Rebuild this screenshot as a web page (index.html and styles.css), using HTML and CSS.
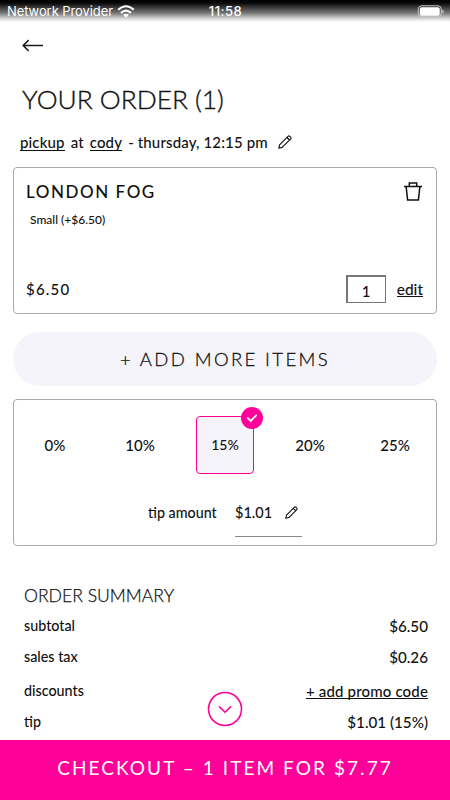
FILE: index.html
```html
<!DOCTYPE html>
<html lang="en">
<head>
<meta charset="utf-8">
<title>Your order</title>
<link rel="stylesheet" href="styles.css">
</head>
<body>
<svg width="0" height="0" class="defs">
  <symbol id="pencil" viewBox="0 0 14 14"><path d="M.8 13.2 1.6 9.9 10.2 1.2Q10.9.6 11.6 1.2L12.8 2.4Q13.4 3.1 12.8 3.8L4.1 12.4ZM9 2.5 11.5 5" fill="none" stroke="#111" stroke-width="1.15" stroke-linejoin="round"/></symbol>
</svg>
<div class="app">
  <header class="status">
    <div class="carrier"><span class="network">Network Provider</span>
      <svg class="wifi" width="18" height="13" viewBox="0 0 18 13"><g fill="none" stroke="#fff" stroke-width="2.1"><path d="M1.2 4.8Q9-2.3 16.8 4.8"/><path d="M4 7.9Q9 3.4 14 7.9"/></g><path d="M6.2 9.8Q9 7.6 11.8 9.8L9 12.7Z" fill="#fff"/></svg>
    </div>
    <span class="clock">11:58</span>
    <svg class="battery" width="28" height="13" viewBox="0 0 28 13"><rect x="2.3" y=".8" width="23" height="11.2" rx="3.3" fill="none" stroke="#c8c8c8" stroke-width="1"/><rect x="3.9" y="2.2" width="19.8" height="8.5" rx="1.7" fill="#fff"/><path d="M26.4 4.4Q27.8 5 27.8 6.4T26.4 8.4Z" fill="#c8c8c8"/></svg>
  </header>
  <svg class="back" width="22" height="14" viewBox="0 0 22 14"><path d="M21 7.5H1.2M6.6 2.1 1.2 7.5 6.6 12.9" fill="none" stroke="#1b1b1b" stroke-width="1.5"/></svg>
  <h1 class="title">YOUR ORDER (1)</h1>
  <div class="pickup"><span class="link">pickup</span><span class="at">at</span><span class="link">cody</span><span class="when">- thursday, 12:15 pm</span><svg class="pencil" width="14" height="14"><use href="#pencil"/></svg></div>
  <section class="item card">
    <div class="item-row">
      <h2 class="item-name">LONDON FOG</h2>
      <svg class="trash" width="18" height="19" viewBox="0 0 18 19"><path d="M0 4.4H18M5.3 4.4V1H12.7V4.4M2.1 4.4 3.6 17.9H14.4L15.9 4.4" fill="none" stroke="#111" stroke-width="1.5"/></svg>
    </div>
    <p class="option">Small (+$6.50)</p>
    <div class="item-foot"><span class="price">$6.50</span><span class="qty">1</span><span class="link edit">edit</span></div>
  </section>
  <button class="add">+ ADD MORE ITEMS</button>
  <section class="tips card">
    <div class="tip-options">
      <span class="tip">0%</span><span class="tip">10%</span>
      <span class="tip selected">15%<svg class="check" width="22" height="22" viewBox="0 0 22 22"><circle cx="11" cy="11" r="11" fill="#ff0099"/><path d="M6.8 11.2 9.7 13.9 15.2 8.4" fill="none" stroke="#fff" stroke-width="1.8" stroke-linecap="round"/></svg></span>
      <span class="tip">20%</span><span class="tip">25%</span>
    </div>
    <div class="tip-amount"><span class="tip-label">tip amount</span><div class="tip-field"><span class="tip-value">$1.01</span><svg width="13" height="13"><use href="#pencil"/></svg></div></div>
  </section>
  <section class="summary">
    <h3 class="summary-title">ORDER SUMMARY</h3>
    <div class="line subtotal"><span class="label">subtotal</span><span class="value">$6.50</span></div>
    <div class="line tax"><span class="label">sales tax</span><span class="value">$0.26</span></div>
    <div class="line discounts"><span class="label">discounts</span><span class="link promo">+ add promo code</span></div>
    <div class="line"><span class="label">tip</span><span class="value total-tip">$1.01 (15%)</span></div>
  </section>
  <svg class="scroll" width="36" height="36" viewBox="0 0 36 36"><circle cx="18" cy="18" r="16.5" fill="#fff" stroke="#ff0099" stroke-width="1.6"/><path d="M12 15.4 18 21.2 24 15.4" fill="none" stroke="#ff0099" stroke-width="1.5"/></svg>
  <footer class="checkout">CHECKOUT – 1 ITEM FOR $7.77</footer>
</div>
</body>
</html>
```
FILE: styles.css
```css
* { box-sizing: border-box; }
body { margin: 0; background: #fff; color: #111; font: 500 15px/20px Lato, "Liberation Sans", sans-serif; }
h1, h2, h3, p { margin: 0; }
.defs { position: absolute; }
.app { position: relative; width: 450px; height: 800px; display: flex; flex-direction: column; overflow: hidden; white-space: nowrap; }
.status { height: 22px; flex: none; display: grid; grid-template-columns: 1fr auto 1fr; align-items: center; padding: 0 6px 0 7px; background: linear-gradient(#000 0, #080808 3px, #777 13px, #ddd 19px, #fff 22px); color: #fff; font: 400 13px/20px Inter, sans-serif; }
.carrier { display: flex; align-items: center; gap: 4px; }
.network { letter-spacing: -.08px; }
.clock { font-weight: 500; letter-spacing: .5px; }
.battery { justify-self: end; }
.back { margin: 16px 0 0 22px; flex: none; height: 14px; }
.title { margin: 31px 0 0 22px; height: 32px; font-size: 26.4px; line-height: 32px; font-weight: 300; letter-spacing: -.05px; -webkit-text-stroke: .35px #111; }
.pickup { display: flex; align-items: center; height: 20px; margin: 17px 0 0 20px; letter-spacing: .14px; }
.at { margin: 0 6px; }
.when { margin-left: 6px; }
.pencil { margin-left: 10px; }
.link { position: relative; height: 20px; }
.link::after { content: ""; position: absolute; left: 0; right: 0; bottom: 2px; height: 1px; background: #111; }
.pickup .link::after { bottom: 1px; }
.card { margin: 0 13px; border: 1px solid #aaa; border-radius: 4px; flex: none; }
.item { height: 147px; margin-top: 15px; padding: 14px 12px 10px; display: flex; flex-direction: column; }
.item-row { display: flex; justify-content: space-between; height: 20px; padding-right: 2px; }
.item-name { font-size: 17px; line-height: 20px; font-weight: 500; letter-spacing: 1.55px; }
.option { margin: 9px 0 0 4px; font-size: 12px; line-height: 18px; font-weight: 500; }
.item-foot { display: flex; align-items: center; margin-top: auto; height: 28px; }
.price { letter-spacing: 1.2px; margin-right: auto; }
.edit { font-size: 15.5px; margin-right: 1px; }
.qty { width: 40px; height: 28px; border: 2px solid #777; border-bottom-width: 1px; border-right-width: 1px; text-align: center; line-height: 28px; margin-right: 11px; }
.add { flex: none; margin: 18px 13px 13px; height: 54px; border: 0; border-radius: 27px; background: #f5f4fa; color: #111; font: 300 18.5px/24px Lato, sans-serif; letter-spacing: 2.4px; -webkit-text-stroke: .3px #111; }
.tips { height: 147px; padding: 16px 0 0; }
.tip-options { display: grid; grid-template-columns: repeat(5, 85px); justify-content: center; justify-items: center; align-items: center; height: 58px; }
.selected { position: relative; width: 58px; height: 58px; border: 1px solid #ff0099; border-radius: 4px; background: #f5f4fa; display: grid; place-items: center; font-size: 14px; }
.check { position: absolute; right: -10px; top: -10px; }
.tip-amount { display: flex; margin: 26px 0 0 134px; }
.tip-label { line-height: 26px; font-size: 14.3px; width: 87px; }
.tip-field { width: 67px; height: 37px; padding: 3px 4px 0 0; border-bottom: 1px solid #888; display: flex; justify-content: space-between; }
.tip-value { font-size: 14.5px; }
.tip-field svg { margin: 3px 0 0; }
.summary { margin: 38px 22px 0 24px; }
.summary-title { height: 24px; font-size: 17.6px; line-height: 24px; font-weight: 300; -webkit-text-stroke: .25px #111; }
.line { display: flex; justify-content: space-between; height: 31px; line-height: 20px; }
.subtotal { margin-top: 8px; }
.tax { height: 34px; }
.label { font-size: 14.3px; }
.value { font-size: 15.2px; }
.promo { letter-spacing: .16px; }
.scroll { position: absolute; left: 207px; top: 691px; }
.checkout { position: absolute; left: 0; right: 0; bottom: 0; height: 60px; padding-top: 4px; background: #ff0099; color: #fff; text-align: center; font-size: 19px; line-height: 48px; font-weight: 400; letter-spacing: 2.06px; }
```
